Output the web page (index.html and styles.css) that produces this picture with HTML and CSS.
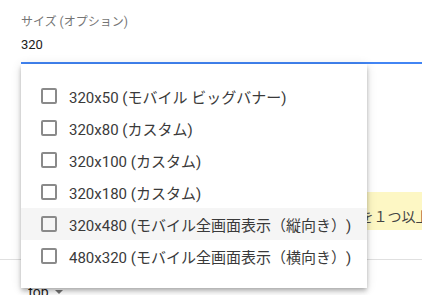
FILE: index.html
```html
<!DOCTYPE html>
<html lang="ja">
<head>
<meta charset="utf-8">
<link rel="stylesheet" href="styles.css">
</head>
<body>
<div class="page">
  <div class="field">
    <div class="field-label">サイズ (オプション)</div>
    <div class="field-input">320</div>
    <div class="menu">
      <div class="item"><span class="box"></span><span class="item-text">320x50 (モバイル ビッグバナー)</span></div>
      <div class="item"><span class="box"></span><span class="item-text">320x80 (カスタム)</span></div>
      <div class="item"><span class="box"></span><span class="item-text">320x100 (カスタム)</span></div>
      <div class="item"><span class="box"></span><span class="item-text">320x180 (カスタム)</span></div>
      <div class="item item-hover"><span class="box"></span><span class="item-text">320x480 (モバイル全画面表示（縦向き）)</span></div>
      <div class="item"><span class="box"></span><span class="item-text">480x320 (モバイル全画面表示（横向き）)</span></div>
    </div>
  </div>
  <div class="notice">サイズを１つ以上選択してください。</div>
  <div class="divider"></div>
  <div class="target">_top<span class="caret"></span></div>
</div>
</body>
</html>
```
FILE: styles.css
```css
html, body {
  margin: 0;
  padding: 0;
  background: #ffffff;
  overflow: hidden;
}
body {
  font-family: Roboto, "Noto Sans CJK JP", "Noto Sans", sans-serif;
  color: rgba(0, 0, 0, 0.87);
  width: 422px;
  height: 295px;
  text-spacing-trim: space-all;
}
.page {
  display: flex;
  flex-direction: column;
}
.field {
  position: relative;
  margin-left: 21px;
  padding-top: 14px;
  padding-bottom: 9px;
  border-bottom: 2px solid #4285f4;
}
.field-label {
  font-size: 12px;
  line-height: 16px;
  color: #757575;
}
.field-input {
  margin-top: 7px;
  font-size: 13px;
  line-height: 16px;
  color: #212121;
}
.menu {
  position: absolute;
  top: calc(100% + 2px);
  left: 0;
  width: 346px;
  padding: 16px 0;
  background: #ffffff;
  box-shadow: 0 2px 4px -1px rgba(0,0,0,0.2), 0 4px 5px 0 rgba(0,0,0,0.14), 0 1px 10px 0 rgba(0,0,0,0.12);
  z-index: 2;
}
.item {
  display: flex;
  align-items: center;
  height: 32px;
  padding-left: 20px;
  font-size: 15px;
  color: #3a3a3a;
}
.item-hover {
  background: #f5f5f5;
}
.box {
  box-sizing: border-box;
  width: 16px;
  height: 16px;
  border: 2px solid #8a8a8a;
  border-radius: 2px;
  flex: none;
}
.item-text {
  margin-left: 12px;
  white-space: nowrap;
}
.notice {
  margin-top: 128px;
  margin-left: 21px;
  width: 460px;
  box-sizing: border-box;
  padding: 17px 0 5px 297px;
  background: #fdf7c4;
  font-size: 14px;
  line-height: 16px;
  color: #444444;
  white-space: nowrap;
  overflow: hidden;
}
.divider {
  margin-top: 29px;
  height: 1px;
  background: #e0e0e0;
}
.target {
  margin-top: 24px;
  margin-left: 22px;
  font-size: 14px;
  line-height: 16px;
  color: #212121;
  display: flex;
  align-items: center;
}
.caret {
  margin-left: 6px;
  width: 0;
  height: 0;
  border-left: 4px solid transparent;
  border-right: 4px solid transparent;
  border-top: 4px solid #757575;
}
```
